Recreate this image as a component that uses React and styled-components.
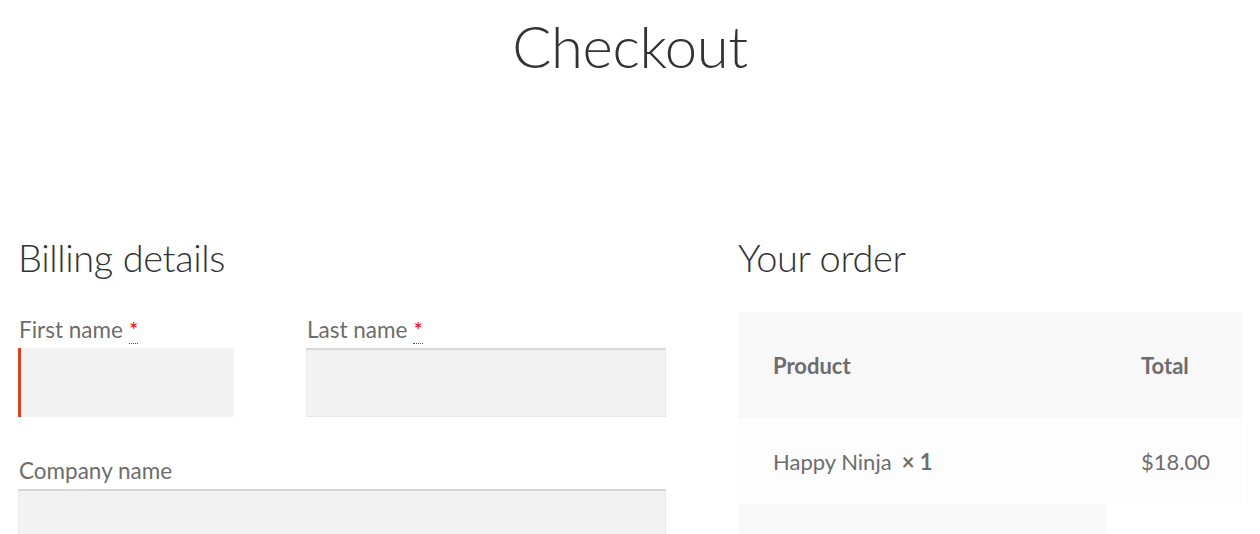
import React from "react";
import styled, { createGlobalStyle } from "styled-components";

const Global = createGlobalStyle`
  html, body { margin: 0; padding: 0; background: #ffffff; }
  body { font-family: Lato, "Liberation Sans", sans-serif; color: #6d6d6d; }
  * { box-sizing: border-box; }
`;

const Page = styled.div`
  width: 1260px;
  padding: 0 18px;
`;

const Title = styled.h1`
  margin: 0;
  padding-top: 12px;
  height: 232px;
  text-align: center;
  font-weight: 300;
  font-size: 58px;
  line-height: 68px;
  color: #333333;
  letter-spacing: -0.4px;
`;

const Columns = styled.div`
  display: flex;
  justify-content: space-between;
`;

const Billing = styled.section`
  width: 648px;
`;

const Order = styled.section`
  width: 504px;
`;

const SectionTitle = styled.h3`
  margin: 0 0 ${(p) => p.$gap}px;
  padding-top: 3px;
  font-weight: 300;
  font-size: 38px;
  line-height: 44px;
  color: #333333;
  letter-spacing: -0.4px;
`;

const FieldGrid = styled.div`
  display: grid;
  grid-template-columns: 288px 360px;
  row-gap: 40px;
`;

const Field = styled.div`
  grid-column: ${(p) => (p.$wide ? "1 / span 2" : "auto")};
  display: flex;
  flex-direction: column;
`;

const Label = styled.label`
  font-size: 22.5px;
  line-height: 24px;
  padding: 2px 0 0 1px;
  margin-bottom: 6px;
  color: #6d6d6d;
`;

const Required = styled.abbr`
  color: #ff0000;
  text-decoration: none;
  border-bottom: 1px dotted #ff0000;
  font-size: 22px;
  margin-left: 6px;
`;

const Input = styled.div`
  width: ${(p) => p.$width}px;
  height: 69px;
  background: #f2f2f2;
  border: 1px solid #e8e8e8;
  border-top: 2px solid #d6d6d6;
  ${(p) =>
    p.$invalid &&
    `
    border: none;
    border-left: 3px solid #e2401c;
  `}
`;

const Table = styled.table`
  width: 504px;
  border-collapse: collapse;
  font-size: 22px;
  color: #6d6d6d;
`;

const HeadCell = styled.th`
  background: #f8f8f8;
  height: 106px;
  padding: 0 0 0 35px;
  text-align: left;
  font-weight: 700;
  width: ${(p) => p.$width}px;
`;

const BodyCell = styled.td`
  background: #fdfdfd;
  height: 86px;
  padding: 0 0 0 35px;
  text-align: left;
`;

const FootCell = styled.th`
  background: ${(p) => (p.$shade ? "#f8f8f8" : "#ffffff")};
  height: 40px;
  padding: 0;
`;

const Qty = styled.strong`
  font-weight: 700;
  margin-left: 10px;
`;

export default function App() {
  return (
    <Page>
      <Global />
      <Title>Checkout</Title>
      <Columns>
        <Billing>
          <SectionTitle $gap={37}>Billing details</SectionTitle>
          <FieldGrid>
            <Field>
              <Label>
                First name<Required title="required">*</Required>
              </Label>
              <Input $width={216} $invalid />
            </Field>
            <Field>
              <Label>
                Last name<Required title="required">*</Required>
              </Label>
              <Input $width={360} />
            </Field>
            <Field $wide>
              <Label>Company name</Label>
              <Input $width={648} />
            </Field>
          </FieldGrid>
        </Billing>
        <Order>
          <SectionTitle $gap={33}>Your order</SectionTitle>
          <Table>
            <thead>
              <tr>
                <HeadCell $width={368}>Product</HeadCell>
                <HeadCell $width={136}>Total</HeadCell>
              </tr>
            </thead>
            <tbody>
              <tr>
                <BodyCell>
                  Happy Ninja<Qty>× 1</Qty>
                </BodyCell>
                <BodyCell>$18.00</BodyCell>
              </tr>
            </tbody>
            <tfoot>
              <tr>
                <FootCell $shade />
                <FootCell />
              </tr>
            </tfoot>
          </Table>
        </Order>
      </Columns>
    </Page>
  );
}
